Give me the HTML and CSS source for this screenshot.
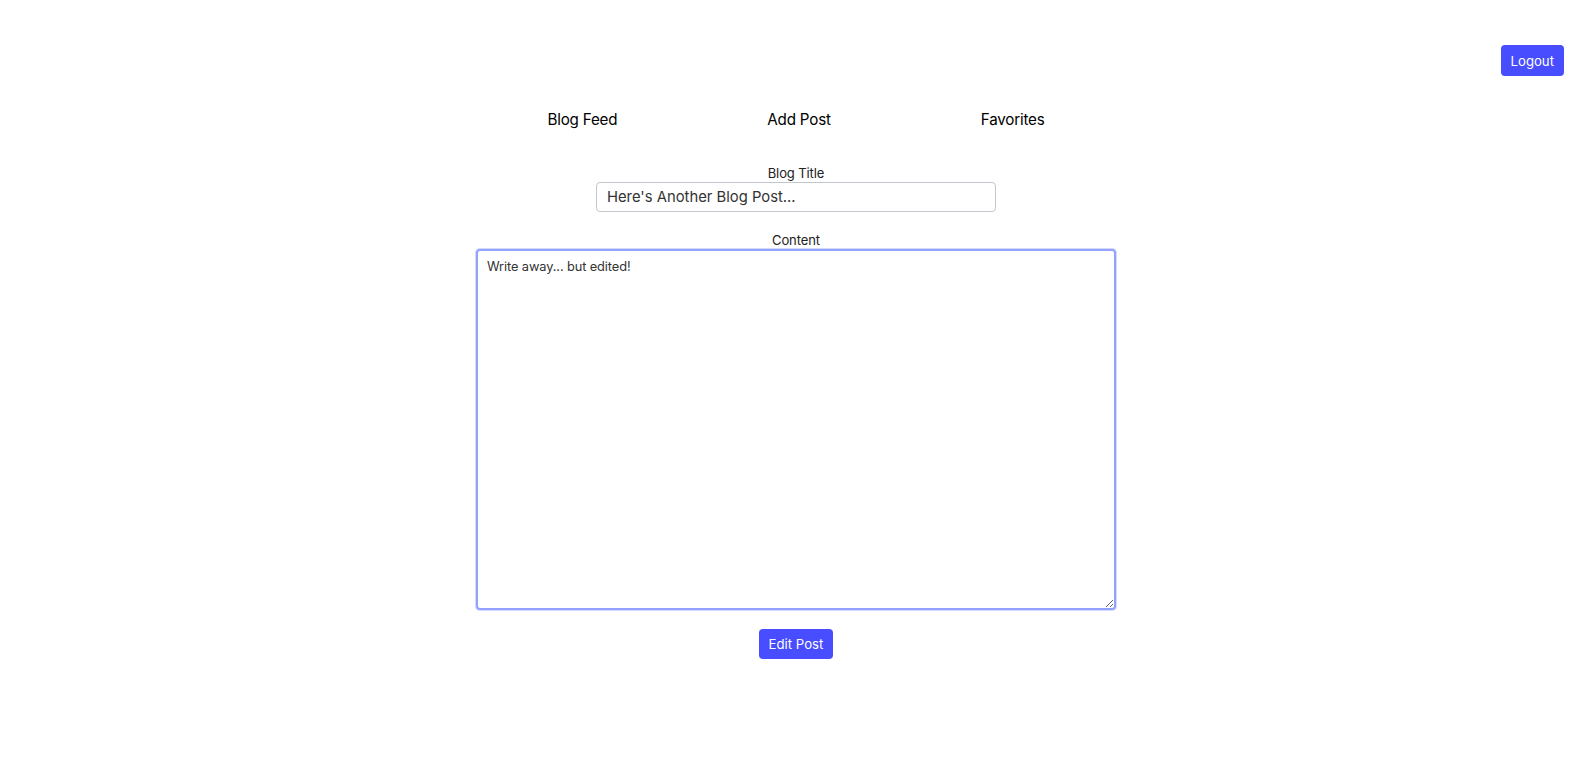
FILE: index.html
```html
<!DOCTYPE html>
<html lang="en">
<head>
<meta charset="utf-8">
<title>Edit Post</title>
<link rel="stylesheet" href="styles.css">
</head>
<body>
<header class="topbar">
  <button class="btn">Logout</button>
</header>
<nav class="nav">
  <a class="nav-link" href="#">Blog Feed</a>
  <a class="nav-link" href="#">Add Post</a>
  <a class="nav-link" href="#">Favorites</a>
</nav>
<form class="post-form">
  <label class="field-label" for="title">Blog Title</label>
  <input class="title-input" id="title" type="text" value="Here's Another Blog Post...">
  <label class="field-label content-label" for="content">Content</label>
  <textarea class="content-input" id="content">Write away... but edited!</textarea>
  <button class="btn submit" type="button">Edit Post</button>
</form>
</body>
</html>
```

FILE: styles.css
```css
html, body {
  margin: 0;
  padding: 0;
  background: #ffffff;
}
body {
  font-family: Inter, "Noto Sans", sans-serif;
  color: #222;
}
.topbar {
  display: flex;
  justify-content: flex-end;
  padding: 45px 28px 0 0;
}
.btn {
  font-family: Inter, "Noto Sans", sans-serif;
  background: #484dff;
  color: #fff;
  border: none;
  border-radius: 4px;
  font-size: 13.2px;
  height: 31px;
  padding: 0 10px;
  cursor: pointer;
}
.nav {
  display: flex;
  justify-content: center;
  gap: 150px;
  margin-top: 32px;
}
.nav-link {
  font-size: 15.2px;
  line-height: 24px;
  color: #000;
  text-decoration: none;
  letter-spacing: -0.2px;
}
.post-form {
  display: flex;
  flex-direction: column;
  align-items: center;
  margin-top: 32px;
}
.field-label {
  font-size: 13px;
  line-height: 18px;
  color: #222;
  letter-spacing: -0.1px;
}
.content-label {
  margin-top: 19px;
}
.title-input {
  box-sizing: border-box;
  width: 400px;
  height: 30px;
  border: 1px solid #c4c6cd;
  border-radius: 4px;
  padding: 0 10px;
  font-family: Inter, "Noto Sans", sans-serif;
  font-size: 14.8px;
  color: #333;
}
.content-input {
  box-sizing: border-box;
  width: 640px;
  height: 361px;
  border: 2px solid #93a2ff;
  box-shadow: 0 0 0 1px #d4d9ff;
  border-radius: 4px;
  padding: 7px 9px;
  font-family: Inter, "Noto Sans", sans-serif;
  font-size: 12.8px;
  line-height: 18px;
  letter-spacing: -0.1px;
  color: #333;
  outline: none;
  resize: both;
}
.submit {
  margin-top: 19px;
  height: 30px;
  padding: 0 10px;
}
```
